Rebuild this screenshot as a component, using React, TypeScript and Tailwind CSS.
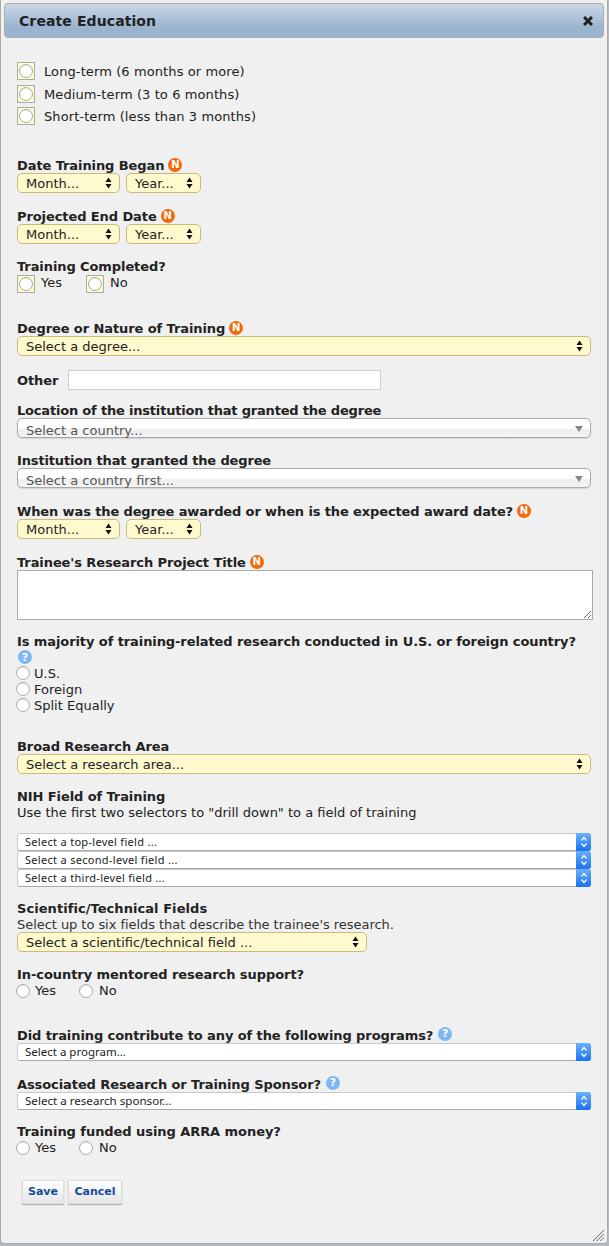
import type { ReactNode } from "react";

function NBadge() {
  return (
    <span className="ml-[4px] inline-flex h-[14px] w-[14px] -translate-y-[2px] items-center justify-center rounded-full bg-[#f26a0a] text-[10px] leading-none font-bold tracking-normal text-white">
      N
    </span>
  );
}

function HelpBadge({ className = "" }: { className?: string }) {
  return (
    <span className={`inline-flex h-[14px] w-[14px] items-center justify-center rounded-full bg-[#7db8f5] text-[11px] leading-none font-bold tracking-normal text-white ${className}`}>
      ?
    </span>
  );
}

function Label({ children, className = "", track = "tracking-[-0.09px]" }: { children: ReactNode; className?: string; track?: string }) {
  return <div className={`h-[16px] whitespace-nowrap text-[13px] leading-[18px] font-bold text-[#222] ${track} ${className}`}>{children}</div>;
}

function UpDown() {
  return (
    <svg width="7" height="12" viewBox="0 0 7 12" className="shrink-0">
      <path d="M3.5 0.5 L6.5 5 L0.5 5 Z M0.5 7 L6.5 7 L3.5 11.5 Z" fill="#111" />
    </svg>
  );
}

function YellowSelect({ text, className = "" }: { text: string; className?: string }) {
  return (
    <div className={`flex h-[20px] items-center justify-between rounded-[5px] border border-[#c9bb7c] bg-[#fffacd] pr-[7px] pl-[8px] text-[13px] text-[#222] ${className}`}>
      <span className="pt-[2px] whitespace-nowrap">{text}</span>
      <UpDown />
    </div>
  );
}

function DateSelects() {
  return (
    <div className="flex gap-[6px]">
      <YellowSelect text="Month..." className="w-[103px]" />
      <YellowSelect text="Year..." className="w-[75px]" />
    </div>
  );
}

function ChosenSelect({ text, className = "" }: { text: string; className?: string }) {
  return (
    <div className={`flex h-[20px] items-center justify-between rounded-[5px] border border-[#aaa] bg-[linear-gradient(#ffffff_0%,#ffffff_50%,#eeeeee_60%,#f4f4f4_100%)] pr-[7px] pl-[8px] text-[13px] text-[#555] shadow-[0_1px_1px_rgba(0,0,0,0.12)] ${className}`}>
      <span className="pt-[6px]">{text}</span>
      <svg width="8" height="6" viewBox="0 0 8 6" className="mt-[2px]">
        <path d="M0 0 H8 L4 6 Z" fill="#888" />
      </svg>
    </div>
  );
}

function BlueSelect({ text, textClass = "text-[11px] tracking-[0.3px]", className = "" }: { text: string; textClass?: string; className?: string }) {
  return (
    <div className={`flex h-[18px] items-stretch rounded-[3px] border-t border-b border-l border-t-[#c8c8c8] border-b-[#aaa] border-l-[#ccc] bg-white text-[#222] ${className}`}>
      <span className={`flex-1 pl-[7px] leading-[16px] font-['Noto_Sans',sans-serif] ${textClass}`}>{text}</span>
      <span className="-my-px flex w-[15px] items-center justify-center rounded-r-[3px] bg-[linear-gradient(#6cb0fb,#1a73f0)]">
        <svg width="8" height="12" viewBox="0 0 8 12" fill="none" stroke="#fff" strokeWidth="1.2">
          <path d="M1.5 4.5 L4 1.5 L6.5 4.5 M1.5 7.5 L4 10.5 L6.5 7.5" />
        </svg>
      </span>
    </div>
  );
}

function Radio() {
  return <input type="radio" className="h-[14px] w-[14px] shrink-0 appearance-none rounded-full border border-[#aaa] bg-white shadow-[inset_0_1px_1px_rgba(0,0,0,0.1)]" />;
}

function BoxedRadio() {
  return (
    <span className="flex h-[18px] w-[18px] shrink-0 items-center justify-center border border-[#aaa] bg-[#ffffcc]">
      <Radio />
    </span>
  );
}

function BoxedOption({ text, className = "" }: { text: string; className?: string }) {
  return (
    <div className={`flex h-[19px] items-center gap-[9px] text-[13px] tracking-[0.1px] text-[#222] ${className}`}>
      <BoxedRadio />
      <span className="pt-[2px]">{text}</span>
    </div>
  );
}

function YesNo({ className = "" }: { className?: string }) {
  return (
    <div className={`-ml-px flex h-[15px] items-center text-[13px] text-[#222] ${className}`}>
      <Radio />
      <span className="ml-[5px] w-[44px]">Yes</span>
      <Radio />
      <span className="ml-[6px]">No</span>
    </div>
  );
}

function App() {
  return (
    <div className="relative h-[1246px] w-[609px] overflow-hidden bg-[#b4b9bd] font-['DejaVu_Sans','Liberation_Sans',sans-serif]">
      <div className="h-[1244px] w-[608px] rounded-b-[4px] border-r border-b border-l border-r-[#aaa] border-b-[#aaa] border-l-[#aaa] bg-[#f0f0f0] pt-[3px]">
        {/* header */}
        <div className="mx-[3px] flex h-[35px] items-center justify-between rounded-[4px] border border-[#aaa] bg-[linear-gradient(#cbd8e6,#9ab4d0_70%,#9ab4d0)] pr-[10px] pl-[14px]">
          <span className="pt-[2px] text-[14px] font-bold tracking-[0.1px] text-[#222]">Create Education</span>
          <svg width="10" height="10" viewBox="0 0 10 10" stroke="#222" strokeWidth="3">
            <path d="M1 1 L9 9 M9 1 L1 9" />
          </svg>
        </div>

        {/* form */}
        <div className="pt-[23px] pr-[16px] pl-[16px]">
          <BoxedOption text="Long-term (6 months or more)" />
          <BoxedOption text="Medium-term (3 to 6 months)" className="mt-[4px]" />
          <BoxedOption text="Short-term (less than 3 months)" className="mt-[3px]" />

          <Label className="mt-[32px]">Date Training Began<NBadge /></Label>
          <DateSelects />

          <Label className="mt-[15px]">Projected End Date<NBadge /></Label>
          <DateSelects />

          <Label className="mt-[14px]">Training Completed?</Label>
          <div className="mt-px flex h-[18px] items-center text-[13px] text-[#222]">
            <BoxedRadio />
            <span className="ml-[6px] w-[45px] -translate-y-px">Yes</span>
            <BoxedRadio />
            <span className="ml-[6px] -translate-y-px">No</span>
          </div>

          <Label className="mt-[27px]">Degree or Nature of Training<NBadge /></Label>
          <YellowSelect text="Select a degree..." className="w-[574px]" />

          <div className="mt-[14px] flex h-[20px] items-center">
            <Label>Other</Label>
            <input className="ml-[10px] h-[20px] w-[313px] border border-[#ccc] bg-white" />
          </div>

          <Label className="mt-[12px]" track="tracking-[-0.19px]">Location of the institution that granted the degree</Label>
          <ChosenSelect text="Select a country..." className="w-[574px]" />

          <Label className="mt-[14px]" track="tracking-[-0.15px]">Institution that granted the degree</Label>
          <ChosenSelect text="Select a country first..." className="w-[574px]" />

          <Label className="mt-[15px]" track="tracking-[-0.12px]">When was the degree awarded or when is the expected award date?<NBadge /></Label>
          <DateSelects />

          <Label className="mt-[15px]">Trainee's Research Project Title<NBadge /></Label>
          <textarea className="block h-[50px] w-[576px] border border-[#aaa] bg-white" />

          <Label className="mt-[13px]">Is majority of training-related research conducted in U.S. or foreign country?</Label>
          <div className="mt-px ml-px flex h-[14px]"><HelpBadge /></div>
          <div className="mt-[2px] -ml-px flex flex-col gap-[2px] text-[13px] text-[#222]">
            <div className="flex h-[14px] items-center gap-[4px]"><Radio /><span className="pt-[2px]">U.S.</span></div>
            <div className="flex h-[14px] items-center gap-[4px]"><Radio /><span className="pt-[2px]">Foreign</span></div>
            <div className="flex h-[14px] items-center gap-[4px]"><Radio /><span className="pt-[2px]">Split Equally</span></div>
          </div>

          <Label className="mt-[26px]">Broad Research Area</Label>
          <YellowSelect text="Select a research area..." className="w-[574px]" />

          <Label className="mt-[14px]">NIH Field of Training</Label>
          <div className="h-[16px] text-[13px] leading-[18px] text-[#222]">Use the first two selectors to "drill down" to a field of training</div>
          <div className="mt-[13px] flex w-[574px] flex-col">
            <BlueSelect text="Select a top-level field ..." />
            <BlueSelect text="Select a second-level field ..." />
            <BlueSelect text="Select a third-level field ..." />
          </div>

          <Label className="mt-[13px]" track="tracking-[0.06px]">Scientific/Technical Fields</Label>
          <div className="h-[16px] text-[13px] leading-[18px] tracking-[-0.05px] text-[#333]">Select up to six fields that describe the trainee's research.</div>
          <YellowSelect text="Select a scientific/technical field ..." className="w-[350px]" />

          <Label className="mt-[14px]" track="tracking-[-0.06px]">In-country mentored research support?</Label>
          <YesNo className="mt-px" />

          <Label className="mt-[29px]">Did training contribute to any of the following programs?<HelpBadge className="ml-[5px] -translate-y-[3px]" /></Label>
          <BlueSelect text="Select a program..." textClass="text-[11.5px]" className="w-[574px]" />

          <Label className="mt-[15px]">Associated Research or Training Sponsor?<HelpBadge className="ml-[5px] -translate-y-[3px]" /></Label>
          <BlueSelect text="Select a research sponsor..." textClass="text-[11.6px]" className="w-[574px]" />

          <Label className="mt-[13px]" track="tracking-[-0.06px]">Training funded using ARRA money?</Label>
          <YesNo className="mt-px" />

          <div className="mt-[25px] ml-[5px] flex gap-[4px]">
            <button className="h-[24px] w-[42px] border border-[#ddd] bg-[linear-gradient(#ffffff,#e6e6e6)] text-[11px] font-bold text-[#124a9c] shadow-[0_1px_1px_rgba(0,0,0,0.25)]">Save</button>
            <button className="h-[24px] w-[54px] border border-[#ddd] bg-[linear-gradient(#ffffff,#e6e6e6)] text-[11px] font-bold text-[#124a9c] shadow-[0_1px_1px_rgba(0,0,0,0.25)]">Cancel</button>
          </div>
        </div>
      </div>

      {/* resize grip */}
      <svg width="11" height="11" viewBox="0 0 12 12" className="absolute right-[5px] bottom-[5px]" stroke="#333" strokeWidth="0.8">
        <path d="M0 12 L12 0 M4 12 L12 4 M8 12 L12 8" />
      </svg>
    </div>
  );
}

export default App;
